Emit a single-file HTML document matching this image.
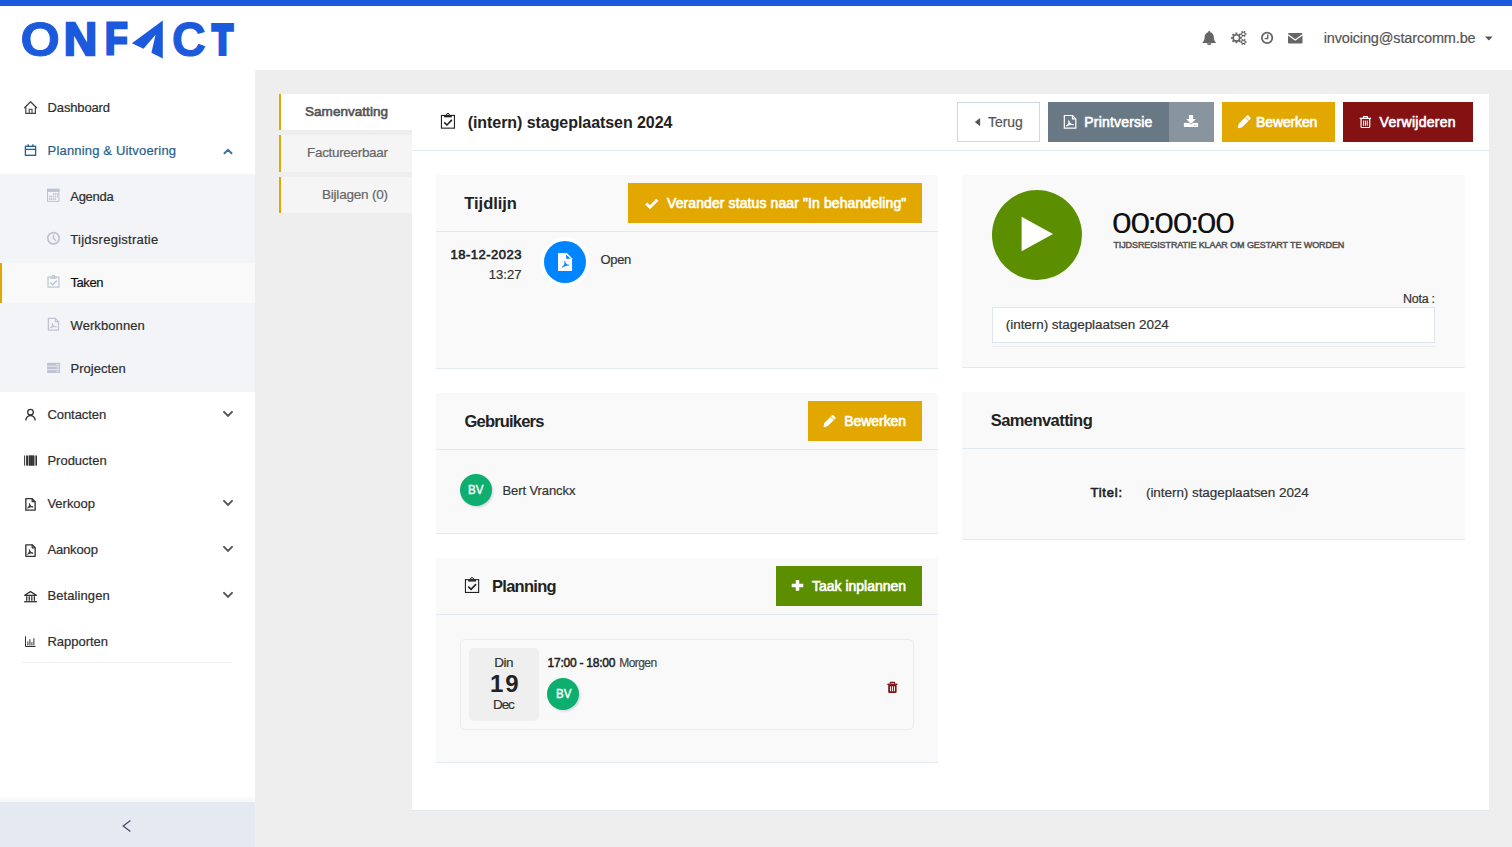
<!DOCTYPE html>
<html lang="nl"><head><meta charset="utf-8"><title>Onfact - Taken</title>
<style>
*{box-sizing:border-box;margin:0;padding:0}
html,body{width:1512px;height:847px;overflow:hidden;background:#eee;font-family:'Liberation Sans',sans-serif}
body{position:relative}
.b{position:absolute}
.t{position:absolute;white-space:pre;line-height:normal}
svg{position:absolute;overflow:visible}
.card{background:#f9f9f9;border-bottom:1px solid #e3e9f1}
.hr{height:1px;background:#e3e9f1}
#timer i{font-style:normal;margin:0 -1.35px}

</style></head>
<body>
<!-- top bar + header -->
<div class="b" style="left:0;top:0;width:1512px;height:70px;background:#fff"></div>
<div class="b" style="left:0;top:0;width:1512px;height:6px;background:#1c5add"></div>
<!-- sidebar -->
<div class="b" style="left:0;top:70px;width:255px;height:777px;background:#fff"></div>
<div class="b" style="left:0;top:174px;width:255px;height:218px;background:#f3f4f8"></div>
<div class="b" style="left:0;top:263px;width:255px;height:40px;background:#f9f9f9;border-left:2px solid #e3a800"></div>
<div class="b" style="left:22px;top:662px;width:210px;height:1px;background:#eceef1"></div>
<div class="b" style="left:0;top:795px;width:255px;height:7px;background:linear-gradient(to bottom,rgba(0,0,0,0),rgba(0,0,0,.035))"></div>
<div class="b" style="left:0;top:802px;width:255px;height:45px;background:#e4e9f2"></div>
<!-- tabs -->
<div class="b" style="left:279px;top:94px;width:133px;height:36px;background:#fff;border-left:2px solid #e3a800"></div>
<div class="b" style="left:279px;top:135px;width:133px;height:37px;background:#f5f5f5;border-left:2px solid #e3a800"></div>
<div class="b" style="left:279px;top:177px;width:133px;height:36px;background:#f5f5f5;border-left:2px solid #e3a800"></div>
<!-- main panel -->
<div class="b" style="left:412px;top:94px;width:1077px;height:717px;background:#fff;border-bottom:1px solid #e1e8f0"></div>
<div class="b" style="left:412px;top:150px;width:1077px;height:1px;background:#e3e9f1"></div>
<!-- toolbar buttons -->
<div class="b" style="left:957px;top:102px;width:83px;height:40px;background:#fff;border:1px solid #ccd6e6"></div>
<div class="b" style="left:1048px;top:102px;width:121px;height:40px;background:#687884"></div>
<div class="b" style="left:1169px;top:102px;width:45px;height:40px;background:#88959e"></div>
<div class="b" style="left:1222px;top:102px;width:113px;height:40px;background:#e3a800"></div>
<div class="b" style="left:1343px;top:102px;width:130px;height:40px;background:#851212"></div>
<!-- cards left -->
<div class="b card" style="left:436px;top:175px;width:502px;height:194px"></div>
<div class="b hr" style="left:436px;top:231px;width:502px"></div>
<div class="b" style="left:628px;top:183px;width:294px;height:40px;background:#e3a800"></div>
<div class="b" style="left:540px;top:236.8px;width:50px;height:50px;border-radius:50%;background:#fff"></div>
<div class="b" style="left:543.9px;top:240.7px;width:42.2px;height:42.2px;border-radius:50%;background:#0084ff"></div>

<div class="b card" style="left:436px;top:393px;width:502px;height:141px"></div>
<div class="b hr" style="left:436px;top:449px;width:502px"></div>
<div class="b" style="left:808px;top:401px;width:114px;height:40px;background:#e3a800"></div>
<div class="b" style="left:460px;top:474px;width:32px;height:32px;border-radius:50%;background:#0dae6e;box-shadow:1.5px 1.5px 2px rgba(150,160,200,.35)"></div>

<div class="b card" style="left:436px;top:558px;width:502px;height:205px"></div>
<div class="b hr" style="left:436px;top:614px;width:502px"></div>
<div class="b" style="left:776px;top:566px;width:146px;height:40px;background:#5b8f00"></div>
<div class="b" style="left:460px;top:639px;width:454px;height:91px;border:1px solid #ececf0;border-radius:5px"></div>
<div class="b" style="left:469px;top:648px;width:70px;height:73px;border-radius:5px;background:#efefef"></div>
<div class="b" style="left:547px;top:678px;width:32px;height:32px;border-radius:50%;background:#0dae6e;box-shadow:1.5px 1.5px 2px rgba(150,160,200,.35)"></div>
<!-- cards right -->
<div class="b card" style="left:962px;top:175px;width:503px;height:193px"></div>
<div class="b" style="left:991.95px;top:189.75px;width:90.25px;height:90.25px;border-radius:50%;background:#5b8f00"></div>
<div class="b" style="left:992px;top:307px;width:443px;height:36px;background:#fff;border:1px solid #dfe5ef"></div>
<div class="b" style="left:992px;top:346px;width:443px;height:1px;background:#ebecef"></div>
<div class="b card" style="left:962px;top:392px;width:503px;height:148px"></div>
<div class="b hr" style="left:962px;top:448px;width:503px"></div>
<span class="t" id="timer" style="left:1111.5px;top:206px;font-size:29.5px;color:#111;letter-spacing:-1px;transform:scaleX(1.198);transform-origin:0 0">00<i>:</i>00<i>:</i>00</span>
<svg width="260" height="70" viewBox="0 0 260 70" style="left:0;top:0" aria-label="ONFACT">
<text transform="translate(20.58 56.23) scale(0.5069 0.4836)" x="0" y="0" font-family="Liberation Sans, sans-serif" font-weight="700" font-size="100" fill="#1c5add" stroke="#1c5add" stroke-width="2.0">O</text>
<text transform="translate(63.85 55.19) scale(0.4625 0.4534)" x="0" y="0" font-family="Liberation Sans, sans-serif" font-weight="700" font-size="100" fill="#1c5add" stroke="#1c5add" stroke-width="5.0">N</text>
<text transform="translate(104.89 54.36) scale(0.3707 0.4355)" x="0" y="0" font-family="Liberation Sans, sans-serif" font-weight="700" font-size="100" fill="#1c5add" stroke="#1c5add" stroke-width="6.5">F</text>
<path d="M131.9 43.2 L162.8 20.4 V58.4 L151.4 52.8 L155.6 34.8 L143.5 48.8Z" fill="#1c5add"/>
<text transform="translate(172.00 56.23) scale(0.4662 0.4836)" x="0" y="0" font-family="Liberation Sans, sans-serif" font-weight="700" font-size="100" fill="#1c5add" stroke="#1c5add" stroke-width="2.4">C</text>
<text transform="translate(212.21 54.40) scale(0.3353 0.4244)" x="0" y="0" font-family="Liberation Sans, sans-serif" font-weight="700" font-size="100" fill="#1c5add" stroke="#1c5add" stroke-width="9.0">T</text>
</svg><svg width="1512" height="847" viewBox="0 0 1512 847" style="left:0;top:0">
<path d="M24.6 107.7 L30.6 101.7 L36.6 107.7" fill="none" stroke="#444" stroke-width="1.3" stroke-linecap="round" stroke-linejoin="round"/>
<path d="M25.8 107.2 V113.3 H35.4 V107.2" fill="none" stroke="#444" stroke-width="1.2"/>
<path d="M29.2 113.3 V109.3 H32 V113.3" fill="none" stroke="#444" stroke-width="1.1"/>
<rect x="25.4" y="146.3" width="10.2" height="9" fill="none" stroke="#1f5e8e" stroke-width="1.3"/>
<path d="M25.4 149.4 H35.6 M28.2 144.3 V147 M32.9 144.3 V147" fill="none" stroke="#1f5e8e" stroke-width="1.3"/>
<path d="M224.5 153.3 L228 149.8 L231.5 153.3" fill="none" stroke="#3a74a0" stroke-width="2" stroke-linecap="round" stroke-linejoin="miter"/>
<rect x="47.5" y="189.3" width="11.4" height="12.1" fill="none" stroke="#bec3d1" stroke-width="1"/>
<rect x="47" y="188.8" width="12.4" height="3.1" fill="#bec3d1"/>
<rect x="52.80" y="193.20" width="1.35" height="1.7" fill="#bec3d1"/>
<rect x="54.75" y="193.20" width="1.35" height="1.7" fill="#bec3d1"/>
<rect x="56.70" y="193.20" width="1.35" height="1.7" fill="#bec3d1"/>
<rect x="48.90" y="195.70" width="1.35" height="1.7" fill="#bec3d1"/>
<rect x="50.85" y="195.70" width="1.35" height="1.7" fill="#bec3d1"/>
<rect x="52.80" y="195.70" width="1.35" height="1.7" fill="#bec3d1"/>
<rect x="54.75" y="195.70" width="1.35" height="1.7" fill="#bec3d1"/>
<rect x="56.70" y="195.70" width="1.35" height="1.7" fill="#bec3d1"/>
<rect x="48.90" y="198.20" width="1.35" height="1.7" fill="#bec3d1"/>
<rect x="50.85" y="198.20" width="1.35" height="1.7" fill="#bec3d1"/>
<rect x="52.80" y="198.20" width="1.35" height="1.7" fill="#bec3d1"/>
<rect x="54.75" y="198.20" width="1.35" height="1.7" fill="#bec3d1"/>
<circle cx="53.5" cy="238.25" r="5.7" fill="none" stroke="#bec3d1" stroke-width="1.7"/>
<path d="M53.5 234.6 V238.5 L56 240.7" fill="none" stroke="#bec3d1" stroke-width="1.5"/>
<rect x="48.00" y="277.11" width="10.95" height="9.99" fill="none" stroke="#bec3d1" stroke-width="1.2"/><rect x="50.13" y="277.59" width="6.68" height="1.17" fill="#bec3d1"/><path d="M52.20 277.01 V276.43 a1.28 1.13 0 0 1 2.55 0 V277.01" fill="none" stroke="#bec3d1" stroke-width="1.08"/><path d="M50.26 282.58 L52.62 284.69 L56.88 280.60" fill="none" stroke="#bec3d1" stroke-width="1.4"/>
<path d="M48.4 318.4 H55.3 L58.5 321.59999999999997 V330.0 H48.4 Z" fill="none" stroke="#bec3d1" stroke-width="1.25" stroke-linejoin="round"/><path d="M55.3 318.4 V321.59999999999997 H58.5" fill="none" stroke="#bec3d1" stroke-width="1.125" stroke-linejoin="round"/><path d="M50.00 327.91 C52.44 326.52 52.66 324.66 52.22 323.27 C52.66 325.13 54.66 326.80 56.66 326.80 C54.11 326.33 52.22 326.98 50.00 327.91Z" fill="#bec3d1" stroke="#bec3d1" stroke-width="0.875" stroke-linejoin="round"/>
<rect x="47.1" y="362.8" width="13" height="2.9" fill="#bec3d1"/>
<rect x="56.5" y="363.8" width="2.3" height="0.9" fill="#e8eaf0"/>
<rect x="47.1" y="366.45" width="13" height="2.9" fill="#bec3d1"/>
<rect x="56.5" y="367.45" width="2.3" height="0.9" fill="#e8eaf0"/>
<rect x="47.1" y="370.1" width="13" height="2.9" fill="#bec3d1"/>
<rect x="56.5" y="371.1" width="2.3" height="0.9" fill="#e8eaf0"/>
<circle cx="30.5" cy="412.2" r="2.8" fill="none" stroke="#333" stroke-width="1.3"/>
<path d="M25.8 420.4 a4.7 4.9 0 0 1 9.4 0" fill="none" stroke="#333" stroke-width="1.3"/>
<rect x="24.1" y="455.5" width="1.0" height="10.1" fill="#333"/>
<rect x="26.1" y="455.5" width="2.2" height="10.1" fill="#333"/>
<rect x="28.9" y="455.5" width="1.6" height="10.1" fill="#333"/>
<rect x="30.8" y="455.5" width="1.2" height="10.1" fill="#333"/>
<rect x="32.3" y="455.5" width="2.0" height="10.1" fill="#333"/>
<rect x="35.4" y="455.5" width="1.6" height="10.1" fill="#333"/>
<rect x="28.9" y="455.5" width="5.4" height="10.1" fill="#333" opacity=".8"/>
<path d="M25.85 498.65 H32.150000000000006 L35.150000000000006 501.65 V510.15 H25.85 Z" fill="none" stroke="#333" stroke-width="1.35" stroke-linejoin="round"/><path d="M32.150000000000006 498.65 V501.65 H35.150000000000006" fill="none" stroke="#333" stroke-width="1.215" stroke-linejoin="round"/><path d="M27.52 508.08 C29.57 506.70 29.76 504.86 29.38 503.48 C29.76 505.32 31.43 506.98 33.10 506.98 C30.96 506.52 29.38 507.16 27.52 508.08Z" fill="#333" stroke="#333" stroke-width="0.945" stroke-linejoin="round"/>
<path d="M25.85 544.85 H32.150000000000006 L35.150000000000006 547.85 V556.35 H25.85 Z" fill="none" stroke="#333" stroke-width="1.35" stroke-linejoin="round"/><path d="M32.150000000000006 544.85 V547.85 H35.150000000000006" fill="none" stroke="#333" stroke-width="1.215" stroke-linejoin="round"/><path d="M27.52 554.28 C29.57 552.90 29.76 551.06 29.38 549.68 C29.76 551.52 31.43 553.18 33.10 553.18 C30.96 552.72 29.38 553.36 27.52 554.28Z" fill="#333" stroke="#333" stroke-width="0.945" stroke-linejoin="round"/>
<path d="M24.7 595.3 L30.5 591.6 L36.4 595.3 Z" fill="none" stroke="#333" stroke-width="1.3" stroke-linejoin="round"/>
<path d="M26.7 596.3 V600.7" stroke="#333" stroke-width="1.3"/>
<path d="M29.25 596.3 V600.7" stroke="#333" stroke-width="1.3"/>
<path d="M31.8 596.3 V600.7" stroke="#333" stroke-width="1.3"/>
<path d="M34.35 596.3 V600.7" stroke="#333" stroke-width="1.3"/>
<path d="M24.1 601.7 H37" stroke="#333" stroke-width="1.3"/>
<path d="M25.5 636.3 V646.5 H35.6" fill="none" stroke="#333" stroke-width="1"/>
<rect x="27.4" y="641.4" width="1" height="4.10" fill="#333"/>
<rect x="29.4" y="639.2" width="1" height="6.30" fill="#333"/>
<rect x="31.4" y="642.1" width="1" height="3.40" fill="#333"/>
<rect x="33.4" y="638.2" width="1" height="7.30" fill="#333"/>
<path d="M224 411.9 L228 415.9 L232 411.9" fill="none" stroke="#555" stroke-width="2" stroke-linecap="round"/>
<path d="M224 500.9 L228 504.9 L232 500.9" fill="none" stroke="#555" stroke-width="2" stroke-linecap="round"/>
<path d="M224 546.9 L228 550.9 L232 546.9" fill="none" stroke="#555" stroke-width="2" stroke-linecap="round"/>
<path d="M224 592.9 L228 596.9 L232 592.9" fill="none" stroke="#555" stroke-width="2" stroke-linecap="round"/>
<path d="M130.4 820.6 L123.2 826.1 L130.4 831.6" fill="none" stroke="#4b4b68" stroke-width="1.3"/>
<path d="M1209.2 30.9 c.6 0 1 .4 1 1 v.4 c2.2 .5 3.6 2.3 3.6 4.8 c0 2.6 .6 3.9 2 5.1 v.8 h-13.2 v-.8 c1.4 -1.2 2 -2.5 2 -5.1 c0 -2.5 1.4 -4.3 3.6 -4.8 v-.4 c0 -.6 .4 -1 1 -1z M1206.9 43.2 h4.6 a2.3 1.9 0 0 1 -4.6 0z" fill="#666"/>
<path d="M1241.82 36.95 L1241.82 38.85 L1240.39 38.86 L1239.90 40.04 L1240.90 41.06 L1239.56 42.40 L1238.54 41.40 L1237.36 41.89 L1237.35 43.32 L1235.45 43.32 L1235.44 41.89 L1234.26 41.40 L1233.24 42.40 L1231.90 41.06 L1232.90 40.04 L1232.41 38.86 L1230.98 38.85 L1230.98 36.95 L1232.41 36.94 L1232.90 35.76 L1231.90 34.74 L1233.24 33.40 L1234.26 34.40 L1235.44 33.91 L1235.45 32.48 L1237.35 32.48 L1237.36 33.91 L1238.54 34.40 L1239.56 33.40 L1240.90 34.74 L1239.90 35.76 L1240.39 36.94Z M1234.00 37.90 a2.4 2.4 0 1 0 4.8 0 a2.4 2.4 0 1 0 -4.8 0Z" fill="#666" fill-rule="evenodd"/>
<path d="M1246.52 33.17 L1246.52 34.63 L1245.59 34.61 L1245.11 35.44 L1245.59 36.23 L1244.32 36.96 L1243.88 36.15 L1242.92 36.15 L1242.48 36.96 L1241.21 36.23 L1241.69 35.44 L1241.21 34.61 L1240.28 34.63 L1240.28 33.17 L1241.21 33.19 L1241.69 32.36 L1241.21 31.57 L1242.48 30.84 L1242.92 31.65 L1243.88 31.65 L1244.32 30.84 L1245.59 31.57 L1245.11 32.36 L1245.59 33.19Z M1242.20 33.90 a1.2 1.2 0 1 0 2.4 0 a1.2 1.2 0 1 0 -2.4 0Z" fill="#666" fill-rule="evenodd"/>
<path d="M1246.52 41.17 L1246.52 42.63 L1245.59 42.61 L1245.11 43.44 L1245.59 44.23 L1244.32 44.96 L1243.88 44.15 L1242.92 44.15 L1242.48 44.96 L1241.21 44.23 L1241.69 43.44 L1241.21 42.61 L1240.28 42.63 L1240.28 41.17 L1241.21 41.19 L1241.69 40.36 L1241.21 39.57 L1242.48 38.84 L1242.92 39.65 L1243.88 39.65 L1244.32 38.84 L1245.59 39.57 L1245.11 40.36 L1245.59 41.19Z M1242.20 41.90 a1.2 1.2 0 1 0 2.4 0 a1.2 1.2 0 1 0 -2.4 0Z" fill="#666" fill-rule="evenodd"/>
<circle cx="1267.1" cy="37.85" r="5.2" fill="none" stroke="#666" stroke-width="1.8"/>
<path d="M1267.7 34.6 V38.6 H1264.6" fill="none" stroke="#666" stroke-width="1.4"/>
<rect x="1288" y="33.1" width="14.5" height="10.5" rx="1.1" fill="#666"/>
<path d="M1287.6 34.4 L1295.25 40 L1302.9 34.4" fill="none" stroke="#fff" stroke-width="1.2"/>
<path d="M1485 36.5 H1492.7 L1488.85 40.6Z" fill="#555"/>
<rect x="441.45" y="115.44" width="13.00" height="12.71" fill="none" stroke="#222" stroke-width="1.1"/><rect x="444.07" y="115.88" width="7.76" height="1.44" fill="#222"/><path d="M446.47 115.39 V114.79 a1.48 1.39 0 0 1 2.96 0 V115.39" fill="none" stroke="#222" stroke-width="0.9900000000000001"/><path d="M444.21 122.38 L446.96 124.99 L451.90 119.93" fill="none" stroke="#222" stroke-width="1.6"/>
<path d="M980.1 118 V126.2 L974.8 122.1Z" fill="#555"/>
<path d="M1064.3 115.5 H1072.3999999999999 L1075.8 118.9 V128.2 H1064.3 Z" fill="none" stroke="#fff" stroke-width="1.2" stroke-linejoin="round"/><path d="M1072.3999999999999 115.5 V118.9 H1075.8" fill="none" stroke="#fff" stroke-width="1.08" stroke-linejoin="round"/><path d="M1066.12 126.04 C1068.90 124.42 1069.15 122.26 1068.65 120.64 C1069.15 122.80 1071.43 124.75 1073.71 124.75 C1070.80 124.21 1068.65 124.96 1066.12 126.04Z" fill="#fff" stroke="#fff" stroke-width="0.84" stroke-linejoin="round"/>
<rect x="1183.9" y="122.9" width="14.2" height="4.1" fill="#fff"/>
<path d="M1189 115 H1193.1 V119.1 H1195.9 L1191.05 123.9 L1186.2 119.1 H1189Z" fill="#fff" stroke="#88959e" stroke-width="1.3" paint-order="stroke"/>
<rect x="1193.4" y="124.9" width="3.2" height="0.8" fill="#b9c1c7"/>
<g transform="translate(1237.90 128.00) rotate(-45)"><path d="M0.3 -0.5 L3.6 -2.40 H15.28 a0.9 0.9 0 0 1 0.9 0.9 V1.50 a0.9 0.9 0 0 1 -0.9 0.9 H3.6 L0.3 0.5Z" fill="#fff"/><path d="M13.08 -2.40 V2.40" stroke="#e3a800" stroke-width="0.8" fill="none"/></g>
<path d="M1359.70 118.38 H1371.10" stroke="#fff" stroke-width="1.32" fill="none"/><path d="M1363.46 118.38 V116.70 H1367.34 V118.38" stroke="#fff" stroke-width="1.2" fill="none" stroke-linejoin="round"/><path d="M1361.07 118.74 V126.50 a1 1 0 0 0 1 1 H1368.73 a1 1 0 0 0 1 -1 V118.74" stroke="#fff" stroke-width="1.2" fill="none"/><path d="M1363.58 120.42 V125.70" stroke="#fff" stroke-width="1.02" fill="none"/><path d="M1365.40 120.42 V125.70" stroke="#fff" stroke-width="1.02" fill="none"/><path d="M1367.22 120.42 V125.70" stroke="#fff" stroke-width="1.02" fill="none"/>
<path d="M646.2 203.5 L650 207.2 L657.3 199.8" fill="none" stroke="#fff" stroke-width="3"/>
<path d="M558 253 H566.9 L572.1 258.2 V271 H558Z" fill="#fff"/>
<path d="M566.2 254.7 V258.8 H570.7Z" fill="#0084ff"/>
<path d="M561.8 267.6 C564.4 266 565.2 263.4 564.7 261 C565.3 263.4 566.8 265 569 265.2 C566.6 265.2 564 266.2 561.8 267.6Z" fill="#0084ff" stroke="#0084ff" stroke-width=".5" stroke-linejoin="round"/>
<path d="M1021.6 216.75 L1053 233.95 L1021.6 251.2Z" fill="#fff"/>
<g transform="translate(823.60 427.00) rotate(-45)"><path d="M0.3 -0.5 L3.6 -2.30 H14.39 a0.9 0.9 0 0 1 0.9 0.9 V1.40 a0.9 0.9 0 0 1 -0.9 0.9 H3.6 L0.3 0.5Z" fill="#fff"/><path d="M12.19 -2.30 V2.30" stroke="#e3a800" stroke-width="0.8" fill="none"/></g>
<rect x="465.45" y="579.65" width="13.20" height="12.80" fill="none" stroke="#222" stroke-width="1.1"/><rect x="468.12" y="580.09" width="7.87" height="1.45" fill="#222"/><path d="M470.55 579.60 V579.00 a1.50 1.40 0 0 1 3.00 0 V579.60" fill="none" stroke="#222" stroke-width="0.9900000000000001"/><path d="M468.26 586.64 L471.05 589.26 L476.05 584.18" fill="none" stroke="#222" stroke-width="1.6"/>
<path d="M797.5 580 V590.8 M791.7 585.4 H803.3" stroke="#fff" stroke-width="3.5" fill="none"/>
<rect x="887.3" y="683.6" width="10.2" height="1.35" fill="#851212"/>
<path d="M890.3 683.8 V682.3 H894.5 V683.8" fill="none" stroke="#851212" stroke-width="1.2" stroke-linejoin="round"/>
<path d="M888.2 685 H896.6 V691.8 a1.2 1.2 0 0 1 -1.2 1.2 H889.4 a1.2 1.2 0 0 1 -1.2 -1.2Z" fill="#851212"/>
<rect x="890.0" y="686.3" width="1.05" height="5" fill="#f6eded"/>
<rect x="891.95" y="686.3" width="1.05" height="5" fill="#f6eded"/>
<rect x="893.9" y="686.3" width="1.05" height="5" fill="#f6eded"/>
</svg>
<span class="t" style="left:47.60px;top:100.00px;font-size:13px;color:#2e2e2e;letter-spacing:-0.15px;-webkit-text-stroke:.2px #2e2e2e;">Dashboard</span>
<span class="t" style="left:47.60px;top:142.90px;font-size:13px;color:#1f5e8e;letter-spacing:0.17px;-webkit-text-stroke:.2px #1f5e8e;">Planning &amp; Uitvoering</span>
<span class="t" style="left:70.30px;top:188.80px;font-size:13px;color:#2e2e2e;letter-spacing:-0.29px;-webkit-text-stroke:.2px #2e2e2e;">Agenda</span>
<span class="t" style="left:70.30px;top:231.50px;font-size:13px;color:#2e2e2e;letter-spacing:0.26px;-webkit-text-stroke:.2px #2e2e2e;">Tijdsregistratie</span>
<span class="t" style="left:70.50px;top:274.50px;font-size:13px;color:#111;letter-spacing:-0.43px;-webkit-text-stroke:.2px #111;">Taken</span>
<span class="t" style="left:70.50px;top:317.70px;font-size:13px;color:#2e2e2e;letter-spacing:0.09px;-webkit-text-stroke:.2px #2e2e2e;">Werkbonnen</span>
<span class="t" style="left:70.50px;top:360.70px;font-size:13px;color:#2e2e2e;letter-spacing:0.03px;-webkit-text-stroke:.2px #2e2e2e;">Projecten</span>
<span class="t" style="left:47.45px;top:406.70px;font-size:13px;color:#2e2e2e;letter-spacing:-0.06px;-webkit-text-stroke:.2px #2e2e2e;">Contacten</span>
<span class="t" style="left:47.45px;top:452.75px;font-size:13px;color:#2e2e2e;letter-spacing:-0.01px;-webkit-text-stroke:.2px #2e2e2e;">Producten</span>
<span class="t" style="left:47.45px;top:496.00px;font-size:13px;color:#2e2e2e;letter-spacing:-0.02px;-webkit-text-stroke:.2px #2e2e2e;">Verkoop</span>
<span class="t" style="left:47.45px;top:541.70px;font-size:13px;color:#2e2e2e;letter-spacing:-0.15px;-webkit-text-stroke:.2px #2e2e2e;">Aankoop</span>
<span class="t" style="left:47.45px;top:587.75px;font-size:13px;color:#2e2e2e;letter-spacing:0.09px;-webkit-text-stroke:.2px #2e2e2e;">Betalingen</span>
<span class="t" style="left:47.45px;top:633.50px;font-size:13px;color:#2e2e2e;letter-spacing:-0.01px;-webkit-text-stroke:.2px #2e2e2e;">Rapporten</span>
<span class="t" style="left:1323.70px;top:30.00px;font-size:14.5px;color:#555;letter-spacing:-0.15px;-webkit-text-stroke:.2px #555;">invoicing@starcomm.be</span>
<span class="t" style="left:305.00px;top:104.20px;font-size:13.5px;color:#555;letter-spacing:0.04px;-webkit-text-stroke:0.62px #555;">Samenvatting</span>
<span class="t" style="left:307.04px;top:145.00px;font-size:13.5px;color:#666;letter-spacing:-0.32px;-webkit-text-stroke:.2px #666;">Factureerbaar</span>
<span class="t" style="left:322.01px;top:187.20px;font-size:13.5px;color:#666;letter-spacing:-0.21px;-webkit-text-stroke:.2px #666;">Bijlagen (0)</span>
<span class="t" style="left:467.70px;top:113.80px;font-size:16px;color:#222;font-weight:700;letter-spacing:-0.06px;">(intern) stageplaatsen 2024</span>
<span class="t" style="left:988.00px;top:113.60px;font-size:14px;color:#555;letter-spacing:-0.03px;-webkit-text-stroke:.2px #555;">Terug</span>
<span class="t" style="left:1084.30px;top:113.60px;font-size:14px;color:#fff;letter-spacing:0.19px;-webkit-text-stroke:0.62px #fff;">Printversie</span>
<span class="t" style="left:1256.10px;top:113.60px;font-size:14px;color:#fff;letter-spacing:-0.15px;-webkit-text-stroke:0.62px #fff;">Bewerken</span>
<span class="t" style="left:1379.60px;top:113.60px;font-size:14px;color:#fff;letter-spacing:0.29px;-webkit-text-stroke:0.62px #fff;">Verwijderen</span>
<span class="t" style="left:464.30px;top:194.00px;font-size:16.5px;color:#222;font-weight:700;letter-spacing:-0.04px;">Tijdlijn</span>
<span class="t" style="left:667.00px;top:195.40px;font-size:14px;color:#fff;letter-spacing:0.1px;-webkit-text-stroke:0.62px #fff;">Verander status naar "In behandeling"</span>
<span class="t" style="left:450.50px;top:247.20px;font-size:13px;color:#222;letter-spacing:0.5px;-webkit-text-stroke:0.62px #222;">18-12-2023</span>
<span class="t" style="left:488.79px;top:266.70px;font-size:13px;color:#333;letter-spacing:0.04px;-webkit-text-stroke:.2px #333;">13:27</span>
<span class="t" style="left:600.40px;top:252.00px;font-size:13px;color:#333;letter-spacing:-0.3px;-webkit-text-stroke:.2px #333;">Open</span>
<span class="t" style="left:1113.40px;top:239.80px;font-size:9px;color:#555;letter-spacing:-0.09px;-webkit-text-stroke:.48px #555;">TIJDSREGISTRATIE KLAAR OM GESTART TE WORDEN</span>
<span class="t" style="left:1402.99px;top:292.00px;font-size:12.5px;color:#333;letter-spacing:-0.27px;-webkit-text-stroke:.2px #333;">Nota :</span>
<span class="t" style="left:1005.80px;top:317.00px;font-size:13.5px;color:#333;letter-spacing:-0.05px;-webkit-text-stroke:.2px #333;">(intern) stageplaatsen 2024</span>
<span class="t" style="left:464.50px;top:412.00px;font-size:16.5px;color:#222;font-weight:700;letter-spacing:-0.81px;">Gebruikers</span>
<span class="t" style="left:844.30px;top:413.20px;font-size:14px;color:#fff;letter-spacing:-0.07px;-webkit-text-stroke:0.62px #fff;">Bewerken</span>
<span class="t" style="left:468.40px;top:482.00px;font-size:13.5px;color:#fff;transform:scaleX(0.855);transform-origin:0 0;-webkit-text-stroke:.45px #fff;">BV</span>
<span class="t" style="left:502.50px;top:483.00px;font-size:13px;color:#333;letter-spacing:-0.09px;-webkit-text-stroke:.2px #333;">Bert Vranckx</span>
<span class="t" style="left:492.00px;top:576.80px;font-size:16.5px;color:#222;font-weight:700;letter-spacing:-0.72px;">Planning</span>
<span class="t" style="left:812.00px;top:577.90px;font-size:14px;color:#fff;letter-spacing:-0.01px;-webkit-text-stroke:0.62px #fff;">Taak inplannen</span>
<span class="t" style="left:494.25px;top:655.10px;font-size:13.5px;color:#333;letter-spacing:-0.48px;-webkit-text-stroke:.2px #333;">Din</span>
<span class="t" style="left:490.00px;top:670.10px;font-size:24px;color:#222;font-weight:700;letter-spacing:1.9px;">19</span>
<span class="t" style="left:493.00px;top:696.90px;font-size:13.5px;color:#333;letter-spacing:-1.11px;-webkit-text-stroke:.2px #333;">Dec</span>
<span class="t" style="left:547.50px;top:656.10px;font-size:12px;color:#222;letter-spacing:-0.23px;-webkit-text-stroke:0.5px #222;">17:00 - 18:00</span>
<span class="t" style="left:619.30px;top:656.10px;font-size:12px;color:#444;letter-spacing:-0.58px;-webkit-text-stroke:.2px #444;">Morgen</span>
<span class="t" style="left:555.50px;top:686.20px;font-size:13.5px;color:#fff;transform:scaleX(0.855);transform-origin:0 0;-webkit-text-stroke:.45px #fff;">BV</span>
<span class="t" style="left:990.70px;top:411.00px;font-size:16.5px;color:#222;font-weight:700;letter-spacing:-0.56px;">Samenvatting</span>
<span class="t" style="left:1090.50px;top:485.00px;font-size:13px;color:#222;letter-spacing:0.76px;-webkit-text-stroke:0.62px #222;">Titel:</span>
<span class="t" style="left:1146.00px;top:485.00px;font-size:13.5px;color:#333;letter-spacing:-0.06px;-webkit-text-stroke:.2px #333;">(intern) stageplaatsen 2024</span>
</body></html>
